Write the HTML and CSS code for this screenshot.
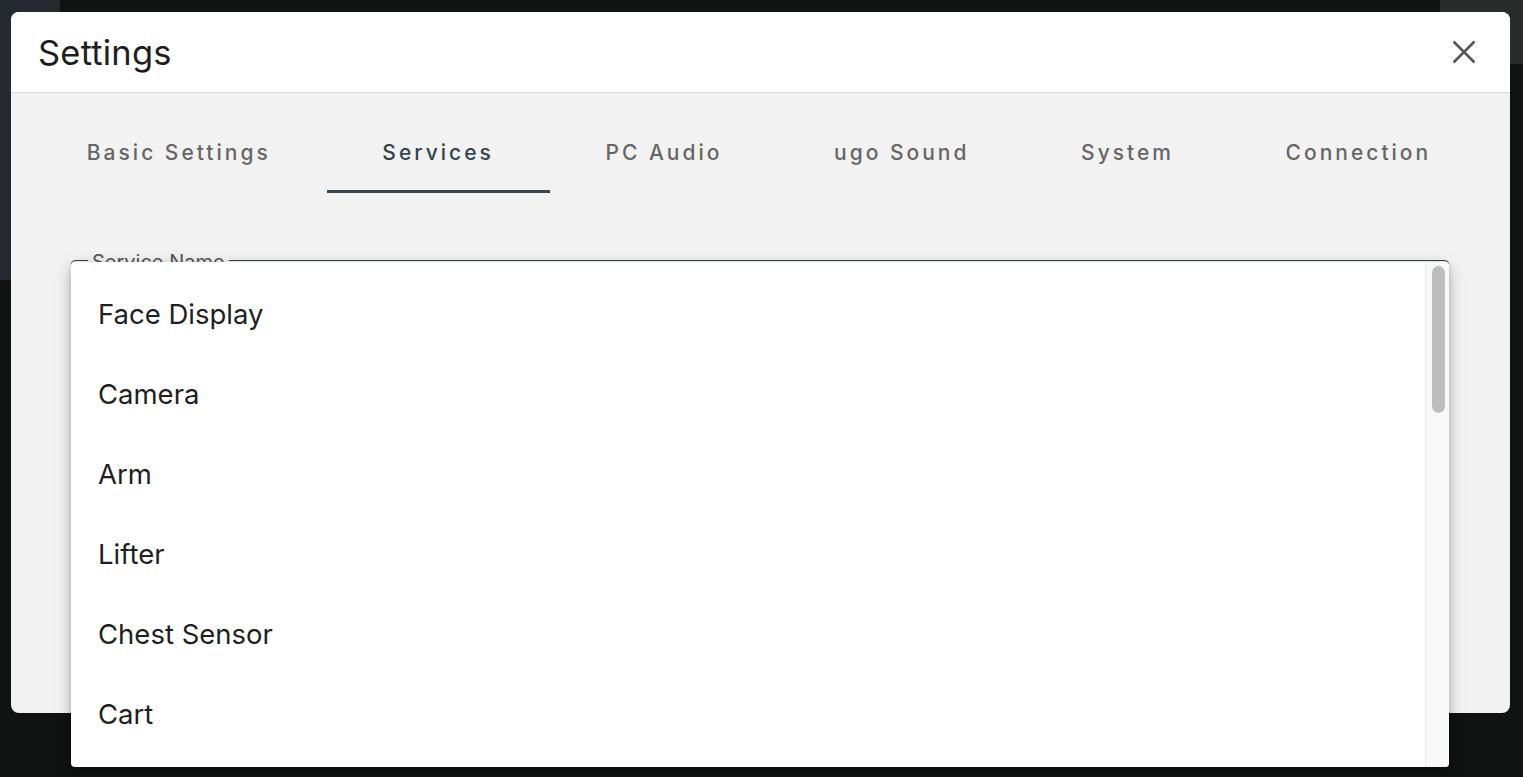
FILE: index.html
```html
<!DOCTYPE html>
<html lang="en">
<head>
<meta charset="utf-8">
<title>Settings</title>
<link rel="stylesheet" href="styles.css">
</head>
<body>
<div class="modal">
  <header class="modal-header">
    <h1 class="modal-title">Settings</h1>
    <button class="close-btn" aria-label="Close">
      <svg width="24" height="24" viewBox="0 0 24 24"><path d="M1.5 1.5 L22.5 22.5 M22.5 1.5 L1.5 22.5" stroke="#555" stroke-width="2.6" fill="none"/></svg>
    </button>
  </header>
  <div class="modal-body">
    <nav class="tabs">
      <div class="tab">Basic Settings</div>
      <div class="tab active">Services</div>
      <div class="tab">PC Audio</div>
      <div class="tab">ugo Sound</div>
      <div class="tab">System</div>
      <div class="tab">Connection</div>
    </nav>
    <fieldset class="field">
      <legend class="field-label">Service Name</legend>
      <div class="field-value"></div>
    </fieldset>
  </div>
</div>
<div class="menu">
  <ul class="menu-list">
    <li class="menu-item">Face Display</li>
    <li class="menu-item">Camera</li>
    <li class="menu-item">Arm</li>
    <li class="menu-item">Lifter</li>
    <li class="menu-item">Chest Sensor</li>
    <li class="menu-item">Cart</li>
  </ul>
  <div class="scroll-track"><div class="scroll-thumb"></div></div>
</div>
</body>
</html>
```
FILE: styles.css
```css
html, body {
  margin: 0;
  padding: 0;
}
body {
  width: 1523px;
  height: 777px;
  overflow: hidden;
  position: relative;
  font-family: "Inter", "Noto Sans", sans-serif;
  background:
    linear-gradient(#242a2f, #242a2f) 0 0 / 60px 280px no-repeat,
    linear-gradient(#2a2b2b, #2a2b2b) right 0 top 0 / 83px 64px no-repeat,
    #111212;
  padding: 12px 13px 0 11px;
  box-sizing: border-box;
}
.modal {
  width: 1499px;
  height: 701px;
  background: #f2f2f2;
  border-radius: 8px;
  overflow: hidden;
  display: flex;
  flex-direction: column;
}
.modal-header {
  height: 80px;
  background: #fff;
  border-bottom: 1px solid #dcdcdc;
  display: flex;
  align-items: center;
  justify-content: space-between;
  padding: 0 34px 0 27px;
  flex-shrink: 0;
}
.modal-title {
  margin: 0;
  font-size: 34.5px;
  font-weight: 400;
  color: #1e1e1e;
  letter-spacing: 0.2px;
}
.close-btn {
  border: 0;
  background: none;
  padding: 0;
  width: 24px;
  height: 24px;
  display: flex;
}
.modal-body {
  flex: 1;
  display: flex;
  flex-direction: column;
}
.tabs {
  display: flex;
  margin: 20px 23px 0 20px;
}
.tab {
  flex: 1 1 auto;
  text-align: center;
  padding: 28px 0 25px;
  line-height: 24px;
  font-size: 21px;
  font-weight: 500;
  letter-spacing: 3px;
  color: #666;
  border-bottom: 3px solid transparent;
}
.tab.active {
  color: #34444d;
  border-bottom-color: #37474f;
}
.field {
  margin: 53px 61px 0 60px;
  padding: 0 16px 40px;
  border: 1px solid #37474f;
  border-radius: 4px;
  min-width: 0;
}
.field-label {
  padding: 4px 4px 0;
  font-size: 20px;
  line-height: 24px;
  color: #555;
}
.menu {
  position: absolute;
  left: 71px;
  top: 262px;
  width: 1378px;
  height: 505px;
  background: #fff;
  border-radius: 4px;
  box-shadow: 0 5px 16px rgba(0, 0, 0, 0.28), 0 2px 5px rgba(0, 0, 0, 0.12);
  display: flex;
  overflow: hidden;
}
.menu-list {
  list-style: none;
  margin: 0;
  padding: 12px 0 0;
  flex: 1;
}
.menu-item {
  height: 80px;
  line-height: 80px;
  padding-left: 27px;
  font-size: 27.5px;
  color: #1f1f1f;
}
.scroll-track {
  width: 23px;
  background: #f8f8f8;
  border-left: 1px solid #e8e8e8;
  flex-shrink: 0;
}
.scroll-thumb {
  margin: 4px 4px 0 6px;
  height: 147px;
  border-radius: 7px;
  background: #bdbdbd;
}
```
